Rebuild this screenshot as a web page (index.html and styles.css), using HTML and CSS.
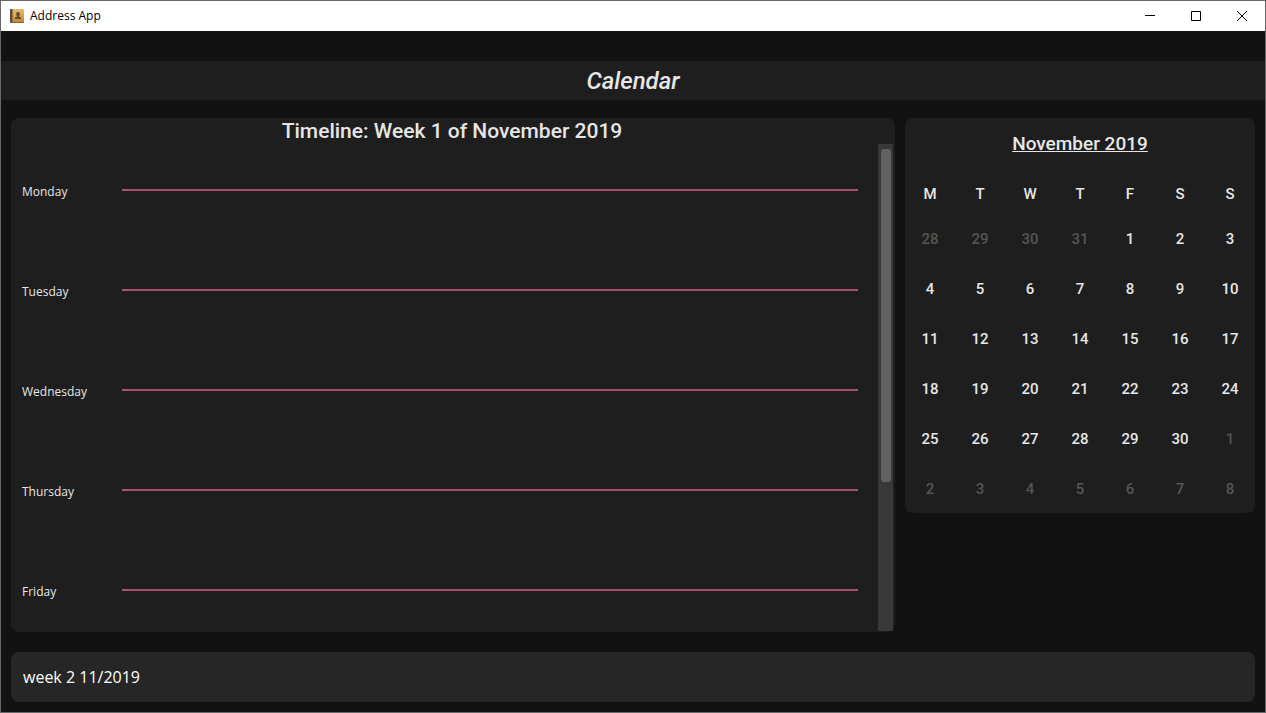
FILE: index.html
```html
<!DOCTYPE html>
<html lang="en">
<head>
<meta charset="utf-8">
<title>Address App</title>
<link rel="stylesheet" href="styles.css">
</head>
<body>
<div class="window">
  <header class="titlebar">
    <svg class="app-icon" viewBox="0 0 14 14" aria-hidden="true">
      <defs>
        <linearGradient id="cover" x1="0" y1="0" x2="0" y2="1">
          <stop offset="0" stop-color="#e9bd72"/>
          <stop offset="1" stop-color="#bd8430"/>
        </linearGradient>
      </defs>
      <rect width="14" height="14" rx="1" fill="url(#cover)"/>
      <path d="M0 1a1 1 0 0 1 1-1h2v14H1a1 1 0 0 1-1-1z" fill="#5a4c3d"/>
      <path d="M2 0h1v14H2z" fill="#98764a"/>
      <path d="M3 13h11v1H3z" fill="#936324"/>
      <path d="M8.100 3c1.200 0 1.700.8 1.700 1.900S9.300 6.700 9 7v.8l2 .7V10H5V8.500l2-.7V7c-.4-.3-.8-1-.8-2.100S6.900 3 8.100 3z" fill="#5b4a33"/>
    </svg>
    <span class="app-name">Address App</span>
    <div class="window-controls">
      <button class="control" type="button" aria-label="Minimize"><svg viewBox="0 0 10 10"><path d="M0 4.500h10"/></svg></button>
      <button class="control" type="button" aria-label="Maximize"><svg viewBox="0 0 10 10"><path d="M.5.500h9v9h-9z"/></svg></button>
      <button class="control" type="button" aria-label="Close"><svg viewBox="0 0 10 10"><path d="M0 0l10 10M10 0L0 10"/></svg></button>
    </div>
  </header>

  <h1 class="page-title">Calendar</h1>

  <main class="content">
    <section class="panel timeline">
      <h2 class="timeline-title">Timeline: Week 1 of November 2019</h2>
      <div class="timeline-view">
        <ul class="days">
          <li class="day"><span class="day-name">Monday</span><span class="day-line"></span></li>
          <li class="day"><span class="day-name">Tuesday</span><span class="day-line"></span></li>
          <li class="day"><span class="day-name">Wednesday</span><span class="day-line"></span></li>
          <li class="day"><span class="day-name">Thursday</span><span class="day-line"></span></li>
          <li class="day"><span class="day-name">Friday</span><span class="day-line"></span></li>
        </ul>
        <div class="scroll-track"><div class="scroll-thumb"></div></div>
      </div>
    </section>

    <section class="panel calendar">
      <h2 class="month">November 2019</h2>
      <table class="month-grid">
        <thead>
          <tr><th>M</th><th>T</th><th>W</th><th>T</th><th>F</th><th>S</th><th>S</th></tr>
        </thead>
        <tbody>
          <tr><td class="outside">28</td><td class="outside">29</td><td class="outside">30</td><td class="outside">31</td><td>1</td><td>2</td><td>3</td></tr>
          <tr><td>4</td><td>5</td><td>6</td><td>7</td><td>8</td><td>9</td><td>10</td></tr>
          <tr><td>11</td><td>12</td><td>13</td><td>14</td><td>15</td><td>16</td><td>17</td></tr>
          <tr><td>18</td><td>19</td><td>20</td><td>21</td><td>22</td><td>23</td><td>24</td></tr>
          <tr><td>25</td><td>26</td><td>27</td><td>28</td><td>29</td><td>30</td><td class="outside">1</td></tr>
          <tr><td class="outside">2</td><td class="outside">3</td><td class="outside">4</td><td class="outside">5</td><td class="outside">6</td><td class="outside">7</td><td class="outside">8</td></tr>
        </tbody>
      </table>
    </section>
  </main>

  <input class="command" type="text" aria-label="Command" value="week 2 11/2019">
</div>
</body>
</html>
```
FILE: styles.css
```css
* {
  box-sizing: border-box;
}

body {
  margin: 0;
  background: #121212;
  color: #e6e6e6;
  font-family: Roboto, "Liberation Sans", sans-serif;
}

h1,
h2,
ul {
  margin: 0;
  padding: 0;
  font-weight: 500;
}

.window {
  display: flex;
  flex-direction: column;
  min-height: 100vh;
  border: 1px solid #68686a;
}

.titlebar {
  display: flex;
  align-items: center;
  height: 30px;
  padding-left: 9px;
  background: #fff;
  color: #000;
}

.app-icon {
  width: 14px;
  height: 14px;
}

.app-name {
  margin-left: 6px;
  font: 12px/16px "Open Sans", "Noto Sans", sans-serif;
}

.window-controls {
  display: flex;
  height: 100%;
  margin-left: auto;
}

.control {
  display: grid;
  place-items: center;
  width: 46px;
  padding: 0;
  border: 0;
  background: none;
}

.control svg {
  width: 10px;
  height: 10px;
  overflow: visible;
  fill: none;
  stroke: #000;
}

.page-title {
  margin: 30px 0 18px;
  padding-top: 2px;
  background: #1e1e1e;
  font-size: 24px;
  font-style: italic;
  line-height: 37px;
  text-align: center;
}

.content {
  display: flex;
  flex: 1;
  align-items: flex-start;
  gap: 10px;
  padding: 0 10px;
}

.panel {
  border-radius: 8px;
  background: #1e1e1e;
}

.timeline {
  display: flex;
  flex: 1;
  flex-direction: column;
  align-self: stretch;
  padding: 0 2px 1px 0;
}

.timeline-title {
  font-size: 21px;
  line-height: 26px;
  text-align: center;
}

.timeline-view {
  display: flex;
  flex: 1;
}

.days {
  flex: 1;
  padding: 36px 20px 0 11px;
  list-style: none;
}

.day {
  display: flex;
  height: 100px;
}

.day:last-child {
  height: 50px;
}

.day-name {
  width: 100px;
  font: 12px/24px "Open Sans", "Noto Sans", sans-serif;
}

.day-line {
  flex: 1;
  height: 2px;
  margin-top: 9px;
  background: #a8516a;
}

.scroll-track {
  width: 15px;
  padding: 5px 2px 0 3px;
  background: #383838;
}

.scroll-thumb {
  height: 69%;
  border-radius: 3px;
  background: #616161;
}

.calendar {
  width: 350px;
}

.month {
  padding-top: 2px;
  font-size: 19px;
  line-height: 48px;
  text-align: center;
  text-decoration: underline;
}

.month-grid {
  width: 100%;
  border-collapse: collapse;
  table-layout: fixed;
  font-size: 15px;
  font-weight: 500;
  text-align: center;
}

.month-grid th {
  height: 45px;
  padding: 6px 0 0;
  font-weight: 500;
}

.month-grid td {
  height: 50px;
  padding: 2px 0 0;
}

.month-grid .outside {
  color: #555;
}

.command {
  height: 50px;
  margin: 20px 10px 10px;
  padding: 0 12px;
  border: 0;
  border-radius: 8px;
  outline: 0;
  background: #262626;
  color: #fff;
  font: 16px "Open Sans", "Noto Sans", sans-serif;
}
```
